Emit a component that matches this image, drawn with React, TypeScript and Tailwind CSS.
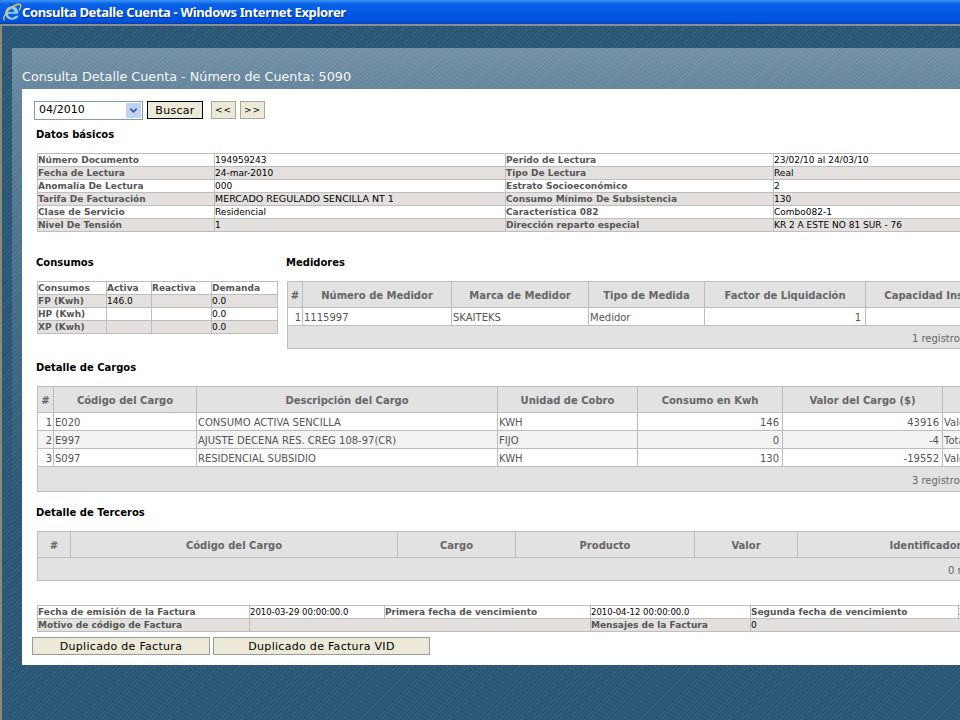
const uiFont = "font-['DejaVu_Sans','Liberation_Sans',sans-serif]"

const basicRows = [
  ['Número Documento', '194959243', 'Perido de Lectura', '23/02/10 al 24/03/10'],
  ['Fecha de Lectura', '24-mar-2010', 'Tipo De Lectura', 'Real'],
  ['Anomalía De Lectura', '000', 'Estrato Socioeconómico', '2'],
  ['Tarifa De Facturación', 'MERCADO REGULADO SENCILLA NT 1', 'Consumo Mínimo De Subsistencia', '130'],
  ['Clase de Servicio', 'Residencial', 'Característica 082', 'Combo082-1'],
  ['Nivel De Tensión', '1', 'Dirección reparto especial', 'KR 2 A ESTE NO 81 SUR - 76'],
]

const consumos = [
  ['FP (Kwh)', '146.0', '', '0.0'],
  ['HP (Kwh)', '', '', '0.0'],
  ['XP (Kwh)', '', '', '0.0'],
]

const cargos = [
  ['1', 'E020', 'CONSUMO ACTIVA SENCILLA', 'KWH', '146', '43916', 'Valor'],
  ['2', 'E997', 'AJUSTE DECENA RES. CREG 108-97(CR)', 'FIJO', '0', '-4', 'Total'],
  ['3', 'S097', 'RESIDENCIAL SUBSIDIO', 'KWH', '130', '-19552', 'Valor'],
]

const label = 'border border-[#bdbdbd] p-0 text-[9px] font-bold whitespace-nowrap text-[#555555]'
const value = 'border border-[#bdbdbd] p-0 text-[9px] whitespace-nowrap'
const dateValue = 'border border-[#bdbdbd] p-0 text-[8.5px] whitespace-nowrap'
const cell = 'border border-[#bdbdbd] p-0 pt-[2px] leading-[14px]'

function Heading({ children }: { children: string }) {
  return <h2 className="text-[10px] leading-[14px] font-bold text-black">{children}</h2>
}

function Cols({ widths }: { widths: number[] }) {
  return (
    <colgroup>
      {widths.map((w, i) => (
        <col key={i} style={{ width: w }} />
      ))}
    </colgroup>
  )
}

function GridHead({ labels }: { labels: string[] }) {
  return (
    <tr className="h-[26px] bg-[#e2e2e2]">
      {labels.map((l, i) => (
        <th key={i} className="border border-[#bdbdbd] p-0 pt-[2px] text-center text-[10px] font-bold whitespace-nowrap text-[#666666]">
          {l}
        </th>
      ))}
    </tr>
  )
}

function GridFoot({ span, h, text }: { span: number; h: string; text: string }) {
  return (
    <tr className={`${h} bg-[#e2e2e2]`}>
      <td colSpan={span} className="border border-[#bdbdbd] p-0 pt-[2px] pr-[52px] text-right text-[10px] text-[#666666]">
        {text}
      </td>
    </tr>
  )
}

function IeLogo() {
  return (
    <svg viewBox="0 0 20 20" className="h-[21px] w-[20px] shrink-0">
      <path d="M15.5 11.5H6.2c.2 2.2 1.8 3.4 3.8 3.4 1.5 0 2.7-.6 3.6-1.8h3.4c-1.2 2.9-3.9 4.4-7 4.4-4.2 0-7-2.9-7-6.7 0-4 3-7.2 7.2-7.2 4 0 6.5 2.9 6.3 7.9zM6.3 9.3h5.9c-.1-1.7-1.3-2.9-2.9-2.9-1.6 0-2.8 1.2-3 2.9z" fill="#8fd0f5" stroke="#1d6fc0" strokeWidth="0.6" />
      <path d="M2.2 17.4C.6 15.6 3.6 9.4 8.6 5.6 12.8 2.4 17 1 18.3 2.3c.9.9.4 2.9-.9 5" fill="none" stroke="#f0c24a" strokeWidth="1.3" strokeLinecap="round" />
    </svg>
  )
}

export default function App() {
  return (
    <div className={`h-[720px] w-[960px] overflow-hidden bg-[#2a5674] ${uiFont}`}>
      {/* Title bar */}
      <div className="flex h-[26px] items-center border-b-2 border-b-[#8a8f98] bg-[linear-gradient(180deg,#3c95f5_0px,#0a62e8_4px,#0058e6_14px,#0050d8_22px,#0a3fa8_100%)] pl-[2px]">
        <IeLogo />
        <span className="font-['Noto_Sans',sans-serif] text-[13px] leading-none font-bold tracking-[-0.35px] whitespace-nowrap text-white [text-shadow:1px_1px_0_#0a2f90]">
          Consulta Detalle Cuenta - Windows Internet Explorer
        </span>
      </div>

      {/* Page background */}
      <div className="h-[694px] border-l-2 border-l-[#8a8a7c] bg-[repeating-linear-gradient(135deg,#2a5674,#2a5674_2px,#33607f_2px,#33607f_3px)] pt-[22px] pl-[10px]">
        <div className="h-[617px] bg-[repeating-linear-gradient(135deg,transparent,transparent_2px,rgba(255,255,255,0.06)_2px,rgba(255,255,255,0.06)_3px),linear-gradient(180deg,#7290a5_0px,#5f8098_60px,#2a5674_460px)] pt-[21px] pl-[10px]">
          <div className="pb-[4px] text-[12.75px] leading-[16px] whitespace-nowrap text-[#f4f7f9]">
            Consulta Detalle Cuenta - Número de Cuenta: 5090
          </div>

          {/* White panel */}
          <div className="h-[576px] overflow-hidden bg-white pt-[12px] pl-[10px]">
            <div className="flex items-start">
              <div className="ml-[2px] flex h-[19px] w-[109px] items-center justify-between border border-[#7f9db9] pr-[1px] pl-[4px] text-[11px] text-black">
                04/2010
                <span className="flex h-[15px] w-[15px] items-center justify-center rounded-[1px] bg-[#c1d2f5]">
                  <svg viewBox="0 0 10 10" className="h-[9px] w-[9px]">
                    <path d="M1.5 3 5 6.5 8.5 3" fill="none" stroke="#3b5a9a" strokeWidth="2" />
                  </svg>
                </span>
              </div>
              <button className="ml-[4px] h-[18px] w-[56px] border border-black bg-[#ece9d8] text-[11px] leading-none tracking-[0.3px] text-black">Buscar</button>
              <button className="ml-[8px] h-[18px] w-[25px] border border-[#aca899] bg-[#ece9d8] text-[9px] leading-none tracking-[1px] text-black">&lt;&lt;</button>
              <button className="ml-[4px] h-[18px] w-[25px] border border-[#aca899] bg-[#ece9d8] text-[9px] leading-none tracking-[1px] text-black">&gt;&gt;</button>
            </div>

            <div className="mt-[8px] ml-[4px]">
              <Heading>Datos básicos</Heading>
            </div>

            {/* Datos basicos */}
            <table className="mt-[11px] ml-[5px] w-[1036px] table-fixed border-collapse leading-[12px] text-black">
              <Cols widths={[177, 291, 268, 300]} />
              <tbody>
                {basicRows.map((r, i) => (
                  <tr key={r[0]} className={`h-[13px] ${i % 2 ? 'bg-[#e3e0de]' : 'bg-white'}`}>
                    <td className={label}>{r[0]}</td>
                    <td className={value}>{i === 3 ? <span className="text-[9.5px]">{r[1]}</span> : r[1]}</td>
                    <td className={label}>{r[2]}</td>
                    <td className={value}>{r[3]}</td>
                  </tr>
                ))}
              </tbody>
            </table>

            <div className="mt-[24px] flex items-start">
              {/* Consumos */}
              <div className="ml-[4px] w-[250px] shrink-0">
                <Heading>Consumos</Heading>
                <table className="mt-[11px] ml-[1px] w-[240px] table-fixed border-collapse leading-[12px] text-black">
                  <Cols widths={[69, 45, 60, 66]} />
                  <tbody>
                    <tr className="h-[13px] bg-white">
                      {['Consumos', 'Activa', 'Reactiva', 'Demanda'].map((h) => (
                        <td key={h} className={label}>{h}</td>
                      ))}
                    </tr>
                    {consumos.map((r, i) => (
                      <tr key={r[0]} className={`h-[13px] ${i % 2 ? 'bg-white' : 'bg-[#e3e0de]'}`}>
                        <td className={label}>{r[0]}</td>
                        <td className={value}>{r[1]}</td>
                        <td className={value}>{r[2]}</td>
                        <td className={value}>{r[3]}</td>
                      </tr>
                    ))}
                  </tbody>
                </table>
              </div>

              {/* Medidores */}
              <div className="shrink-0">
                <Heading>Medidores</Heading>
                <table className="mt-[11px] ml-[1px] w-[730px] table-fixed border-collapse text-[10px] text-[#555555]">
                  <Cols widths={[15, 149, 137, 116, 161, 152]} />
                  <thead>
                    <GridHead labels={['#', 'Número de Medidor', 'Marca de Medidor', 'Tipo de Medida', 'Factor de Liquidación', 'Capacidad Instalada']} />
                  </thead>
                  <tbody>
                    <tr className="h-[18px] bg-white">
                      <td className={`${cell} pr-[1px] text-right`}>1</td>
                      <td className={`${cell} pl-[1px]`}>1115997</td>
                      <td className={`${cell} pl-[1px]`}>SKAITEKS</td>
                      <td className={`${cell} pl-[1px]`}>Medidor</td>
                      <td className={`${cell} pr-[4px] text-right`}>1</td>
                      <td className={cell}></td>
                    </tr>
                    <GridFoot span={6} h="h-[23px]" text="1 registros" />
                  </tbody>
                </table>
              </div>
            </div>

            <div className="mt-[12px] ml-[4px]">
              <Heading>Detalle de Cargos</Heading>
            </div>

            {/* Detalle de Cargos */}
            <table className="mt-[11px] ml-[5px] w-[980px] table-fixed border-collapse text-[10px] text-[#555555]">
              <Cols widths={[16, 143, 301, 140, 145, 160, 75]} />
              <thead>
                <GridHead labels={['#', 'Código del Cargo', 'Descripción del Cargo', 'Unidad de Cobro', 'Consumo en Kwh', 'Valor del Cargo ($)', '']} />
              </thead>
              <tbody>
                {cargos.map((r, i) => (
                  <tr key={r[0]} className={`h-[18px] ${i % 2 ? 'bg-[#f3f3f3]' : 'bg-white'}`}>
                    <td className={`${cell} pr-[1px] text-right`}>{r[0]}</td>
                    <td className={`${cell} pl-[1px]`}>{r[1]}</td>
                    <td className={`${cell} pl-[1px] whitespace-nowrap`}>{r[2]}</td>
                    <td className={`${cell} pl-[1px]`}>{r[3]}</td>
                    <td className={`${cell} pr-[3px] text-right`}>{r[4]}</td>
                    <td className={`${cell} pr-[3px] text-right`}>{r[5]}</td>
                    <td className={`${cell} pl-[1px]`}>{r[6]}</td>
                  </tr>
                ))}
                <GridFoot span={7} h="h-[25px]" text="3 registros" />
              </tbody>
            </table>

            <div className="mt-[14px] ml-[4px]">
              <Heading>Detalle de Terceros</Heading>
            </div>

            {/* Detalle de Terceros */}
            <table className="mt-[11px] ml-[5px] w-[1016px] table-fixed border-collapse text-[10px] text-[#555555]">
              <Cols widths={[33, 327, 118, 179, 103, 256]} />
              <thead>
                <GridHead labels={['#', 'Código del Cargo', 'Cargo', 'Producto', 'Valor', 'Identificador']} />
              </thead>
              <tbody>
                <GridFoot span={6} h="h-[23px]" text="0 registros" />
              </tbody>
            </table>

            {/* Fechas */}
            <table className="mt-[24px] ml-[5px] w-[1021px] table-fixed border-collapse leading-[12px] text-black">
              <Cols widths={[212, 135, 206, 160, 208, 100]} />
              <tbody>
                <tr className="h-[13px] bg-white">
                  <td className={label}>Fecha de emisión de la Factura</td>
                  <td className={dateValue}>2010-03-29 00:00:00.0</td>
                  <td className={label}>Primera fecha de vencimiento</td>
                  <td className={dateValue}>2010-04-12 00:00:00.0</td>
                  <td className={label}>Segunda fecha de vencimiento</td>
                  <td className={dateValue}>2010-04-26</td>
                </tr>
                <tr className="h-[13px] bg-[#e3e0de]">
                  <td className={label}>Motivo de código de Factura</td>
                  <td colSpan={2} className={value}></td>
                  <td className={label}>Mensajes de la Factura</td>
                  <td colSpan={2} className={value}>0</td>
                </tr>
              </tbody>
            </table>

            <div className="mt-[5px] flex gap-[3px]">
              <button className="h-[18px] w-[178px] border border-[#9a9a9a] bg-[#ece9d8] text-[11px] leading-none tracking-[0.3px] text-black">Duplicado de Factura</button>
              <button className="h-[18px] w-[217px] border border-[#9a9a9a] bg-[#ece9d8] text-[11px] leading-none tracking-[0.3px] text-black">Duplicado de Factura VID</button>
            </div>
          </div>
        </div>
      </div>
    </div>
  )
}
